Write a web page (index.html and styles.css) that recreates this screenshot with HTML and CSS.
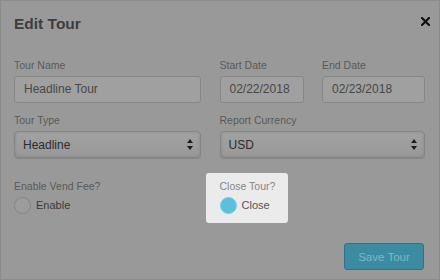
FILE: index.html
```html
<!DOCTYPE html>
<html lang="en">
<head>
    <meta charset="UTF-8">
    <title>Edit Tour</title>
    <link rel="stylesheet" href="styles.css">
</head>
<body>
    <div class="modal">
        <div class="modal-header">
            <h2>Edit Tour</h2>
            <svg class="close-x" width="9" height="9" viewBox="0 0 9 9"><path d="M1 1 L8 8 M8 1 L1 8" stroke="#111" stroke-width="2.2" stroke-linecap="square"/></svg>
        </div>
        <div class="form-grid">
            <div class="group col-1">
                <label>Tour Name</label>
                <div class="input">Headline Tour</div>
            </div>
            <div class="group col-2">
                <label>Start Date</label>
                <div class="input">02/22/2018</div>
            </div>
            <div class="group col-3">
                <label>End Date</label>
                <div class="input">02/23/2018</div>
            </div>
            <div class="group col-1">
                <label>Tour Type</label>
                <div class="select">
                    <span>Headline</span>
                    <svg width="6" height="11" viewBox="0 0 6 11"><path d="M3 0 L6 4 L0 4 Z M0 7 L6 7 L3 11 Z" fill="#1e1e1e"/></svg>
                </div>
            </div>
            <div class="group col-wide">
                <label>Report Currency</label>
                <div class="select">
                    <span>USD</span>
                    <svg width="6" height="11" viewBox="0 0 6 11"><path d="M3 0 L6 4 L0 4 Z M0 7 L6 7 L3 11 Z" fill="#1e1e1e"/></svg>
                </div>
            </div>
            <div class="group col-1 check-row">
                <label>Enable Vend Fee?</label>
                <div class="radio-line">
                    <span class="radio"></span>
                    <span>Enable</span>
                </div>
            </div>
            <div class="group col-wide check-row">
                <div class="highlight">
                    <label>Close Tour?</label>
                    <div class="radio-line">
                        <span class="radio on"></span>
                        <span>Close</span>
                    </div>
                </div>
            </div>
        </div>
        <div class="modal-footer">
            <button type="button">Save Tour</button>
        </div>
    </div>
</body>
</html>
```

FILE: styles.css
```css
body { margin: 0; font-family: "Liberation Sans", Arial, sans-serif; background: #999; }
.modal { box-sizing: border-box; width: 440px; height: 280px; border: 1px solid #8c8c8c; background: #999; padding: 13px 14px 0 13px; }
.modal-header { display: flex; justify-content: space-between; align-items: flex-start; }
.modal-header h2 { margin: 0; font-size: 15.5px; line-height: 20px; font-weight: bold; color: #3d3d3d; }
.close-x { margin: 3px -5px 0 0; }
.form-grid { display: grid; grid-template-columns: 187px 84px 103px; justify-content: space-between; row-gap: 11px; margin-top: 25px; }
.col-1 { grid-column: 1; }
.col-2 { grid-column: 2; }
.col-3 { grid-column: 3; }
.col-wide { grid-column: 2 / 4; }
label { display: block; font-size: 10.5px; line-height: 13px; color: #5a5a5a; margin-bottom: 4px; }
.input { box-sizing: border-box; height: 27px; padding: 0 9px; border: 1px solid #878787; border-radius: 3px; background: #a0a0a0; font-size: 12px; line-height: 25px; color: #474747; }
.select { box-sizing: border-box; height: 27px; display: flex; justify-content: space-between; align-items: center; padding: 0 7px 0 8px; border: 1px solid #858585; border-radius: 4px; background: linear-gradient(#a2a2a2, #989898); box-shadow: inset 0 0 3px rgba(0,0,0,0.15), 0 1px 1px rgba(0,0,0,0.12); font-size: 12px; color: #2b2b2b; }
.check-row { margin-top: 11px; }
.radio-line { display: flex; align-items: center; height: 16px; font-size: 11px; line-height: 16px; color: #3a3a3a; }
.radio { box-sizing: border-box; width: 17px; height: 17px; border-radius: 50%; border: 1px solid #848484; background: #9c9c9c; margin-right: 5px; }
.radio.on { background: #5bc0de; border-color: #7ccbe4; }
.highlight { width: max-content; margin: -7px 0 -10px -14px; padding: 7px 13px 10px 14px; background: #ebebeb; border-radius: 3px; }
.highlight label { color: #868686; }
.highlight .radio-line { color: #555; }
.modal-footer { display: flex; justify-content: flex-end; margin-top: 30px; margin-right: 1px; }
button { box-sizing: border-box; width: 80px; height: 27px; border: 1px solid #2e7387; border-radius: 3px; background: #3b8ba3; color: #87b3c0; font-family: "Liberation Sans", Arial, sans-serif; font-size: 11.5px; padding: 0; }
```
